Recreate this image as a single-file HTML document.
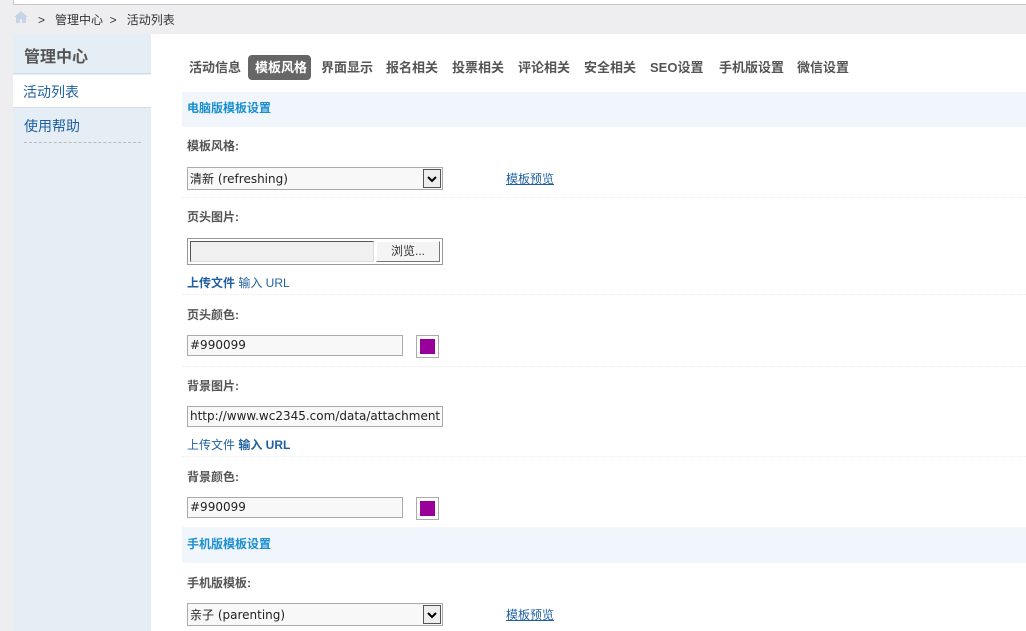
<!DOCTYPE html>
<html><head><meta charset="utf-8"><style>
*{margin:0;padding:0;box-sizing:border-box}
body{width:1026px;height:631px;overflow:hidden;background:#eeeef0;font-family:"Liberation Sans","Noto Sans CJK SC",sans-serif;font-size:12px;color:#333;position:relative}
.a{position:absolute;white-space:nowrap}
.top{left:13px;top:0;width:1013px;height:5px;background:#fff;border-bottom:1px solid #c8c8c8;border-left:1px solid #c8c8c8}
.side{left:13px;top:34px;width:138px;height:597px;background:#e5edf5}
.main{left:151px;top:34px;width:875px;height:597px;background:#fff}
.tab{top:57px;font-weight:bold;font-size:13px;color:#555}
.hd{left:182px;width:844px;background:#f0f6fc;color:#1a8fd0;font-weight:bold;font-size:12px;padding-left:5px}
.lb{left:187px;font-weight:bold;color:#555;font-size:12px}
.sep{left:182px;width:844px;border-top:1px dotted #e4ecf4;height:0}
.inp{left:187px;height:21px;border:1px solid #aaa;background:#f8f8f8;font-family:"DejaVu Sans","Noto Sans CJK SC",sans-serif;font-size:12px;color:#222;padding:2px 2px;overflow:hidden}
.sw{left:416px;width:23px;height:23px;border:1px solid #aaa;background:#fff}
.sw i{position:absolute;left:3px;top:3px;width:15px;height:15px;background:#990099}
.lk{color:#1f5f9f;font-size:12px}
.dd{position:absolute;right:1px;top:1px;width:18px;height:19px;border:1px solid #555;background:#eee}
</style></head><body>
<div class="a top"></div>
<div class="a" style="left:14px;top:11px;width:14px;height:12px">
<svg width="14" height="12"><path d="M7 0L0 6h2v6h4V8h2v4h4V6h2z" fill="#c5d5e5"/></svg></div>
<div class="a" style="left:38px;top:11px;color:#333">&gt;&nbsp;&nbsp; 管理中心 &nbsp;&gt;&nbsp;&nbsp; 活动列表</div>
<div class="a side"></div>
<div class="a" style="left:13px;top:34px;width:138px;height:40px;border-bottom:1px solid #d4dde6"></div>
<div class="a" style="left:24px;top:43px;font-size:16px;font-weight:bold;color:#555">管理中心</div>
<div class="a" style="left:13px;top:75px;width:138px;height:33px;background:#fff;border-bottom:1px solid #d4dde6"></div>
<div class="a" style="left:23px;top:82px;font-size:14px;color:#1f5f9f">活动列表</div>
<div class="a" style="left:24px;top:116px;font-size:14px;color:#1f5f9f">使用帮助</div>
<div class="a" style="left:24px;top:142px;width:117px;border-top:1px dashed #bbb"></div>
<div class="a main"></div>
<div class="a" style="left:248px;top:55px;width:63px;height:25px;background:#666;border-radius:4px"></div>
<div class="a tab" style="left:189px">活动信息</div>
<div class="a tab" style="left:255px;color:#fff">模板风格</div>
<div class="a tab" style="left:321px">界面显示</div>
<div class="a tab" style="left:386px">报名相关</div>
<div class="a tab" style="left:452px">投票相关</div>
<div class="a tab" style="left:518px">评论相关</div>
<div class="a tab" style="left:584px">安全相关</div>
<div class="a tab" style="left:650px">SEO设置</div>
<div class="a tab" style="left:719px">手机版设置</div>
<div class="a tab" style="left:797px">微信设置</div>

<div class="a hd" style="top:92px;height:35px;line-height:33px">电脑版模板设置</div>
<div class="a lb" style="top:137px">模板风格:</div>
<div class="a inp" style="top:167px;width:256px;height:23px">清新 (refreshing)<span class="dd"><svg width="16" height="17"><path d="M4 7l4 4 4-4" stroke="#000" stroke-width="2" fill="none"/></svg></span></div>
<div class="a lk" style="left:506px;top:170px;text-decoration:underline">模板预览</div>
<div class="a sep" style="top:197px"></div>
<div class="a lb" style="top:208px">页头图片:</div>
<div class="a" style="left:187px;top:238px;width:256px;height:27px;border:1px solid #999;background:#fff"></div>
<div class="a" style="left:190px;top:241px;width:184px;height:21px;border:1px solid #555;border-right-color:#ddd;border-bottom-color:#ddd;background:#f0f0f0"></div>
<div class="a" style="left:376px;top:241px;width:64px;height:21px;border:1px solid #777;border-top-color:#fff;border-left-color:#fff;background:#f4f4f4;text-align:center;line-height:19px">浏览...</div>
<div class="a lk" style="left:187px;top:274px"><b>上传文件</b> 输入 URL</div>
<div class="a sep" style="top:294px"></div>
<div class="a lb" style="top:306px">页头颜色:</div>
<div class="a inp" style="top:335px;width:216px">#990099</div>
<div class="a sw" style="top:335px"><i></i></div>
<div class="a sep" style="top:366px"></div>
<div class="a lb" style="top:377px">背景图片:</div>
<div class="a inp" style="top:406px;width:256px">http://www.wc2345.com/data/attachment</div>
<div class="a lk" style="left:187px;top:436px">上传文件 <b>输入 URL</b></div>
<div class="a sep" style="top:456px"></div>
<div class="a lb" style="top:468px">背景颜色:</div>
<div class="a inp" style="top:497px;width:216px">#990099</div>
<div class="a sw" style="top:497px"><i></i></div>
<div class="a hd" style="top:527px;height:36px;line-height:35px">手机版模板设置</div>
<div class="a lb" style="top:574px">手机版模板:</div>
<div class="a inp" style="top:603px;width:256px;height:23px">亲子 (parenting)<span class="dd"><svg width="16" height="17"><path d="M4 7l4 4 4-4" stroke="#000" stroke-width="2" fill="none"/></svg></span></div>
<div class="a lk" style="left:506px;top:606px;text-decoration:underline">模板预览</div>
</body></html>
